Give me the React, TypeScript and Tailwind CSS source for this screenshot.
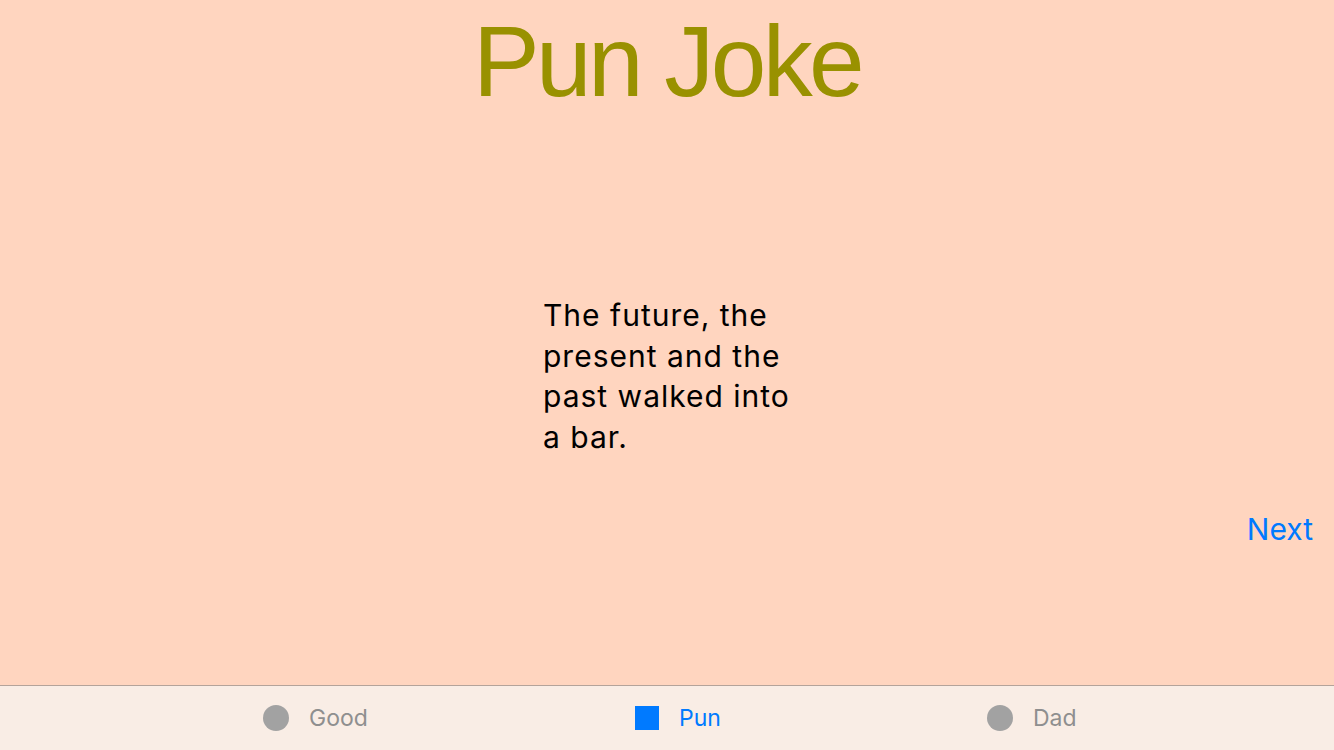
const tabs = [
  { label: "Good", shape: "circle", active: false, width: "w-[372px]" },
  { label: "Pun", shape: "square", active: true, width: "w-[352px]" },
  { label: "Dad", shape: "circle", active: false, width: "w-[200px]" },
];

export default function App() {
  return (
    <div
      className="h-screen w-full flex flex-col bg-[#ffd5bf]"
      style={{ fontFamily: "Inter, \"Liberation Sans\", sans-serif" }}
    >
      <main className="flex-1 flex flex-col border-b border-[#b4a39a]">
        <h1
          className="pt-[11px] text-center text-[100px] leading-[100px] tracking-[-3.6px] text-[#999100]"
          style={{ fontFamily: '"Liberation Sans", Arial, sans-serif' }}
        >
          Pun Joke
        </h1>
        <p className="mt-[184px] mx-auto w-[260px] pl-[6px] text-[30px] leading-[40.5px] tracking-[1px] text-black">
          The future, the present and the past walked into a bar.
        </p>
        <div className="mt-[54px] flex justify-end pr-[21px]">
          <button className="text-[30px] leading-[36px] text-[#007aff]">Next</button>
        </div>
      </main>
      <nav className="h-[64px] flex items-center pl-[263px] bg-[#f9ede5]">
        {tabs.map((tab) => (
          <div key={tab.label} className={`${tab.width} flex items-center gap-[20px]`}>
            {tab.shape === "circle" ? (
              <span className="w-[26px] h-[26px] rounded-full bg-[#a2a2a2]" />
            ) : (
              <span className="w-[24px] h-[24px] bg-[#007aff]" />
            )}
            <span
              className={`text-[23px] leading-none ${
                tab.active ? "text-[#007aff]" : "text-[#8f8f8f]"
              }`}
            >
              {tab.label}
            </span>
          </div>
        ))}
      </nav>
    </div>
  );
}
